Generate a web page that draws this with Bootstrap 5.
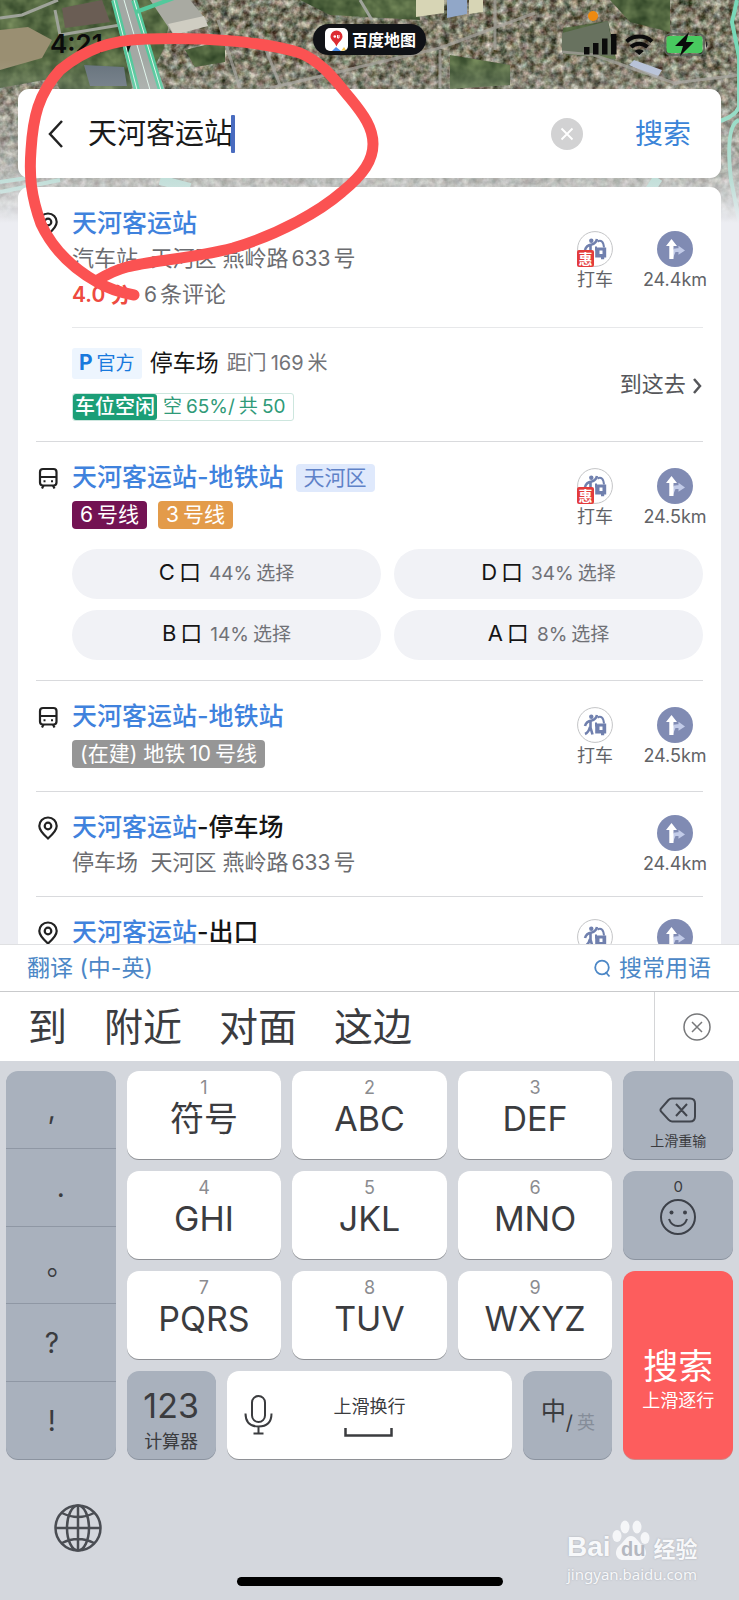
<!DOCTYPE html>
<html lang="zh-CN">
<head>
<meta charset="utf-8">
<meta name="viewport" content="width=device-width, initial-scale=1">
<title>百度地图 - 天河客运站</title>
<link href="https://cdn.jsdelivr.net/npm/bootstrap@5.3.0/dist/css/bootstrap.min.css" rel="stylesheet">
<style>
  body { font-family: Inter, "Noto Sans CJK SC", sans-serif; background: #ecedf2; color: #151515; }
  button { font-family: inherit; color: inherit; border: 0; background: none; padding: 0; }
  a { text-decoration: none; color: inherit; }
  .app { height: 100vh; overflow: hidden; }
  .map-bg { position: absolute; top: 0; left: 0; width: 100%; height: 240px; }
  .ink { position: absolute; top: 0; left: 0; width: 400px; height: 320px; pointer-events: none; z-index: 5; }

  .status { height: 89px; padding: 0 28px; }
  .clock { font-size: 26px; font-weight: 600; line-height: 40px; color: #0b0b0b; }
  .clock span { margin-left: 22px; }
  .island { background: #101216; color: #fff; border-radius: 16px; height: 31px; padding: 0 10px 0 12px; font: 700 16px/31px "Noto Sans CJK SC", sans-serif; }
  .side { flex: 1 1 0; }

  .sheet { background: #fff; border-radius: 11px; margin: 0 18px; }
  .searchbar { height: 89px; padding: 0 30px; }
  .searchbar input { border: 0; outline: 0; width: 100%; font-size: 29px; line-height: 42px; padding: 0; color: #1a1a1a; background: none; }
  .caret { position: absolute; left: 143px; top: 2px; width: 4px; height: 38px; background: #4a6cc0; border-radius: 1px; }
  .go { font-size: 28px; line-height: 42px; color: #3a84d8; }

  .results { border-radius: 11px 11px 0 0; margin-top: 9px; min-height: 0; padding: 1px 18px 0; overflow: hidden; }
  .place { border-bottom: 1px solid #d9dadd; padding: 18px 0 14px; display: grid; grid-template-columns: 36px minmax(0, 1fr); }
  .place > .marker { width: 24px; height: 36px; display: flex; align-items: center; }
  .transit { min-height: 78px; }
  .name { font-size: 25px; font-weight: 500; line-height: 24px; padding: 5px 0 7px; color: #151515; margin: 0; white-space: nowrap; }
  .name em { font-style: normal; color: #3f82dd; }
  .meta { font-size: 22px; line-height: 32px; padding-bottom: 3px; color: #6b6c70; white-space: nowrap; }
  .meta .num { margin: 0 3px; font-size: 21px; }
  .score { color: #ee4a40; font-weight: 600; font-size: 21px; }
  .num { margin: 0 4px; }
  .tag { display: inline-block; border-radius: 4px; font-size: 21px; line-height: 28px; color: #fff; padding: 0 8px; white-space: nowrap; }
  .name-row { gap: 12px; }
  .district { background: #dfe9fc; color: #5f82c8; }
  .tags { margin-top: 5px; display: flex; gap: 11px; }
  .acts { display: flex; gap: 34px; }
  .taxi, .route { display: flex; flex-direction: column; align-items: center; font-size: 18px; line-height: 26px; color: #626367; white-space: nowrap; }
  .taxi { width: 36px; }
  .route { width: 56px; }
  .disc { position: relative; width: 36px; height: 36px; }
  .disc svg { display: block; }
  .deal { position: absolute; left: 0; bottom: 0; width: 17px; height: 17px; border-radius: 2px; background: #e33b3b; color: #fff; font: 700 14px/16px "Noto Sans CJK SC", sans-serif; text-align: center; }
  .parking { border-top: 1px solid #e7e8ea; margin-top: 13px; padding: 20px 0 6px; }
  .official { background: #edf5fe; color: #1879dd; font-size: 19px; line-height: 30px; padding: 0 7px; border-radius: 3px; }
  .official b { font-size: 21px; margin-right: 4px; }
  .lot { font-size: 23px; line-height: 30px; }
  .dist { font-size: 20px; line-height: 30px; color: #737478; }
  .vacancy { border: 1px solid #cde6de; border-radius: 3px; display: flex; width: fit-content; height: 28px; font-size: 19px; line-height: 26px; color: #2f9a78; padding-right: 8px; margin-top: 14px; }
  .vacancy strong { background: #1b9e77; color: #fff; font-size: 20px; font-weight: 500; padding: 0 2px; margin-right: 6px; border-radius: 3px; }
  .togo { font-size: 22px; color: #55565a; }
  .exits { grid-column: 2; display: grid; grid-template-columns: 1fr 1fr; gap: 11px 13px; margin: 11px 0 6px; }
  .exits button { height: 50px; border-radius: 25px; background: #f1f2f6; font-size: 22px; line-height: 46px; padding-bottom: 4px; }
  .exits i { font-style: normal; margin-right: 4px; }
  .exits span { font-size: 19px; color: #707176; margin-left: 8px; }

  .keyboard { background: #d4d7dd; color: #3b3c3f; }
  .phrases { background: #fff; height: 47px; border-top: 1px solid #dfe0e2; padding: 0 28px 0 27px; font-size: 23px; color: #4c87c6; }
  .candidates { background: #fff; height: 70px; border-top: 1px solid #c9cacc; padding-left: 28px; font-size: 39px; line-height: 70px; }
  .candidates .words { gap: 37px; }
  .dismiss { width: 85px; border-left: 1px solid #d4d5d7; }
  .keys { display: grid; grid-template-columns: 110fr 155fr 155fr 155fr 110fr; grid-auto-rows: 88px; gap: 12px 11px; padding: 10px 6px 0; }
  .key { background: #fff; border-radius: 12px; box-shadow: 0 1px 0 #8e9095; display: flex; flex-direction: column; align-items: center; font-size: 34px; line-height: 38px; min-width: 0; }
  .key small { font-size: 18px; line-height: 24px; color: #8b8c90; padding-top: 5px; }
  .dim { background: #a9b1bd; box-shadow: 0 1px 0 #8b939f; }
  .puncts { grid-row: span 4; border-radius: 12px; overflow: hidden; background: #a9b1bd; box-shadow: 0 1px 0 #8b939f; }
  .puncts button { flex: 1; border-bottom: 1px solid #8f97a4; padding-right: 18px; font-size: 28px; }
  .puncts button:last-child { border: 0; }
  .bottom-keys { grid-column: span 3; display: grid; grid-template-columns: 89fr 286fr 89fr; gap: 11px; }
  .enter { grid-row: span 2; background: #fd5d5d; color: #fff; box-shadow: 0 1px 0 #c88; justify-content: center; font-size: 35px; line-height: 44px; padding-top: 28px; }
  .hint { font-size: 18px; line-height: 26px; }
  .footer-bar { height: 141px; padding: 45px 0 0 54px; position: relative; }
  .home { position: absolute; bottom: 14px; left: 50%; width: 36%; height: 9px; border-radius: 5px; background: #000; transform: translateX(-50%); }
  .watermark { position: absolute; right: 40px; bottom: 14px; width: 132px; color: #f7f8fa; text-shadow: 0 0 2px #a4a8b0; }
  .wm-logo { font: 700 28px/30px "Liberation Sans", sans-serif; }
  .wm-logo .cn { font: 700 22px/30px "Noto Sans CJK SC", sans-serif; margin-left: 4px; }
  .wm-url { font: 15px/24px "Noto Sans", sans-serif; }
</style>
<script src="https://cdn.jsdelivr.net/npm/bootstrap@5.3.0/dist/js/bootstrap.bundle.min.js"></script>
</head>
<body>
<svg width="0" height="0" class="position-absolute" aria-hidden="true">
  <symbol id="pin" viewBox="0 0 24 26"><path d="M12 2.500c-5 0-8.700 3.800-8.700 8.600C3.300 16 8.500 20.500 12 23.500c3.500-3 8.700-7.500 8.700-12.400C20.700 6.300 17 2.500 12 2.500z" fill="none" stroke="#222" stroke-width="2.200"/><circle cx="12" cy="11" r="3.300" fill="none" stroke="#222" stroke-width="2.200"/></symbol>
  <symbol id="bus" viewBox="0 0 24 26"><rect x="4" y="4" width="16.500" height="16.500" rx="3" fill="none" stroke="#222" stroke-width="2.200"/><path d="M4 12h16.500M7.500 20.500l-1.500 3M17 20.500l1.500 3" stroke="#222" stroke-width="2.200"/><path d="M7.500 15.200h2v2h-2zM15 15.200h2v2h-2z" fill="#222"/></symbol>
  <symbol id="cab" viewBox="0 0 36 36"><circle cx="18" cy="18" r="17.400" fill="#fff" stroke="#c3c4c6" stroke-width="1"/><circle cx="14.300" cy="9.800" r="2.200" fill="#7080ae"/><path d="M20 8c-1 4-3 5-5.500 5.500-3 .5-5.500 2-6.500 5.500M13.500 13.500v7l2 7M13 20c-1 4-2.500 6-5 7" fill="none" stroke="#7080ae" stroke-width="2.600"/><path d="M20.500 10.500c3.500-1.800 6 0 6.500 6M19 15.500v4" fill="none" stroke="#7080ae" stroke-width="2"/><path fill-rule="evenodd" d="M18.200 16.500h11v10h-2v1.800h-3.200v-1.800h-5.800zM22.500 19.500v3.500h3v-3.500z" fill="#7080ae"/></symbol>
  <symbol id="turn" viewBox="0 0 36 36"><circle cx="18" cy="18" r="18" fill="#808bb3"/><path d="M16 27v-7c0-2 1-2.700 5.500-2.700v-2.500l6.500 4.700-6.500 4.200v-2.700h-3" fill="#c2cbe8"/><path d="M12.300 28V15H9l5.500-7 5.500 7h-3.500v13z" fill="#fff"/></symbol>
</svg>

<div class="app d-flex flex-column position-relative">
  <svg class="map-bg" viewBox="0 0 739 240" preserveAspectRatio="xMidYMin slice" aria-hidden="true">
    <defs>
      <filter id="roofs" x="0" y="0" width="100%" height="100%" color-interpolation-filters="sRGB"><feTurbulence type="fractalNoise" baseFrequency=".14" numOctaves="3" seed="8"/><feColorMatrix values=".95 .2 0 0 -.09  .95 0 .1 0 -.05  .95 0 0 .1 -.12  0 0 0 0 1"/></filter>
      <filter id="grass" x="0" y="0" width="100%" height="100%" color-interpolation-filters="sRGB"><feTurbulence type="fractalNoise" baseFrequency=".06" numOctaves="3" seed="3"/><feColorMatrix values=".4 0 0 0 .12  .4 0 0 0 .2  .3 0 0 0 .1  0 0 0 0 1"/><feComposite in2="SourceGraphic" operator="in"/></filter>
      <linearGradient id="fade" x2="0" y2="1"><stop offset=".25" stop-color="#ecedf2" stop-opacity="0"/><stop offset=".72" stop-color="#dcdfe3" stop-opacity=".6"/><stop offset=".93" stop-color="#ecedf2"/></linearGradient>
    </defs>
    <rect width="739" height="240" filter="url(#roofs)"/>
    <g filter="url(#grass)">
      <path d="M0 0h175l-12 50-15 30-20 10H60l-5-12-55 10z"/><path d="M300 0h118l2 20-90-5z"/><path d="M610 0h60v32l-40-10zM563 28l45-7 8 38-53-5zM185 50l40-10v22l-30 5zM450 55l60 10v20l-60 4z"/>
    </g>
    <path d="M0 30l28-3 24 13-10 18-42 12z" fill="#9a8f72"/>
    <path d="M0 18l22-3L58 0M55 10l5 25 60-10M360 0l12 20" fill="none" stroke="#9fa39a" stroke-width="3"/>
    <path d="M62 8l40-8 8 22-45 6z" fill="#6a5d54"/>
    <path d="M150 0h40l18 22-35 12z" fill="#a9aaa2"/><path d="M168 24l36-8 4 10-34 9z" fill="#cfcdc2"/>
    <path d="M416 0h28v13l-28 4z" fill="#d7d5b5"/><path d="M447 0h20v14l-20 4z" fill="#91a7c8"/><path d="M469 0h14v12l-14 2z" fill="#d7d5b5"/>
    <path d="M562 33l46-12 6 35-52-3z" fill="#68725f"/><path d="M634 60l28 10-5 8-28-13z" fill="#b7c2d8"/>
    <path d="M84 65l40 2 3 19H90z" fill="#66727c"/>
    <path d="M270 88l170-40 95-35M440 50v38M218 20l22 68M260 35l20 50M495 0v50M739 75l-65 8-80-28-32-3" fill="none" stroke="#a4a19b" stroke-width="3" opacity=".75"/>
    <path d="M112 0h20l33 90h-32z" fill="#a3a8a4"/>
    <path d="M114 0l23 90M134 0l27 90" stroke="#53c99c" stroke-width="6"/>
    <path d="M114 0l23 90M134 0l27 90M124 0l26 90" stroke="#e0f6ec" stroke-width="1"/>
    <path d="M136 12l38-14" stroke="#53c99c" stroke-width="4"/>
    <path d="M737 0l-5 22 7 35v50q-4 10-22 15M739 120q-14 5-8 60l10 50" fill="none" stroke="#79d8b8" stroke-width="4"/>
    <path d="M0 182l40-6M0 192l60-12" stroke="#8cdcc2" stroke-width="4"/>
    <path d="M160 180l30 8M650 190l8-12" stroke="#8fdcc4" stroke-width="10"/>
    <circle cx="593" cy="16" r="5" fill="#ee8a10"/>
    <rect width="739" height="240" fill="url(#fade)"/>
  </svg>

  <header class="status d-flex position-relative flex-shrink-0">
    <div class="side clock d-flex align-items-start"><span class="mt-4">4:21</span>
      <svg class="ms-3 mt-4" width="16" height="40" viewBox="0 0 16 40" aria-hidden="true"><path d="M1 21L15 13 9 29 7.500 22z" fill="#111"/></svg></div>
    <div class="island d-flex align-items-center gap-1 mt-4 align-self-start">
      <svg width="23" height="23" viewBox="0 0 23 23" aria-hidden="true"><rect width="23" height="23" rx="5" fill="#fff"/><path d="M7 23l4-4 5 4z" fill="#4b8eea"/><path d="M16 23l3-4 2 3z" fill="#f5c64b"/><path d="M11.500 2.500a6 6 0 0 0-6 6c0 3.500 4 5 6 10 2-5 6-6.500 6-10a6 6 0 0 0-6-6z" fill="#dd2c32"/><circle cx="9.800" cy="8.500" r="1.300" fill="#fff"/><path d="M12.500 7v3h1.500V7" fill="none" stroke="#fff"/></svg>
      百度地图</div>
    <div class="side d-flex justify-content-end">
      <svg class="mt-4" width="128" height="40" viewBox="0 0 128 40" aria-hidden="true">
        <path d="M1 23h5.500v7.500H1zM10 19h5.500v11.500H10zM19 14.500h5.500v16H19zM28 10h5.500v20.500H28z" fill="#0b0b0b"/>
        <g fill="none" stroke="#0b0b0b" stroke-width="4"><path d="M43.500 17.500a19 19 0 0 1 25.500 0M48 23a12 12 0 0 1 16.500 0"/></g><path d="M51.500 27a7 7 0 0 1 9.500 0l-4.700 4z" fill="#0b0b0b"/>
        <rect x="82" y="10" width="39" height="21" rx="5" fill="none" stroke="#5b625b" stroke-width="1.500"/><rect x="83.500" y="12" width="36" height="17" rx="3" fill="#48c95f"/><path d="M123 17q3 3 0 7z" fill="#222"/>
        <path d="M106 8L92 22h8l-3 10 14-14h-8z" fill="#0b0b0b"/>
      </svg>
    </div>
  </header>

  <form class="sheet searchbar d-flex align-items-center position-relative flex-shrink-0" role="search" onsubmit="return false">
    <button type="button" aria-label="返回"><svg class="d-block" width="16" height="30" viewBox="0 0 16 30"><path d="M14 2L2 15l12 13" fill="none" stroke="#222" stroke-width="2.500"/></svg></button>
    <div class="position-relative flex-grow-1 ms-4"><input type="text" value="天河客运站" aria-label="搜索地点"><span class="caret"></span></div>
    <button type="button" class="me-5" aria-label="清除"><svg class="d-block" width="32" height="32" viewBox="0 0 32 32"><circle cx="16" cy="16" r="16" fill="#d2d2d3"/><path d="M10.500 10.500l11 11m0-11l-11 11" stroke="#fff" stroke-width="1.800"/></svg></button>
    <button type="submit" class="go ms-1">搜索</button>
  </form>

  <main class="sheet results flex-grow-1 position-relative">
    <article class="place">
      <span class="marker"><svg width="24" height="26"><use href="#pin"/></svg></span>
      <div>
        <div class="d-flex align-items-center">
          <div class="flex-grow-1"><h2 class="name"><a href="#"><em>天河客运站</em></a></h2>
            <div class="meta">汽车站 &nbsp;天河区 燕岭路<span class="num">633</span>号</div>
            <div class="meta"><span class="score">4.0 分</span>&nbsp; <span class="num ms-0">6</span>条评论</div></div>
          <div class="acts mt-1"><button type="button" class="taxi"><span class="disc"><svg width="36" height="36"><use href="#cab"/></svg><span class="deal">惠</span></span>打车</button>
          <button type="button" class="route"><span class="disc"><svg width="36" height="36"><use href="#turn"/></svg></span>24.4km</button></div>
        </div>
        <div class="parking d-flex align-items-center">
          <div class="flex-grow-1">
            <div class="d-flex"><span class="official"><b>P</b>官方</span><span class="lot ms-2">停车场</span><span class="dist ms-2">距门<span class="num">169</span>米</span></div>
            <div class="vacancy"><strong>车位空闲</strong>空<span class="num">65%/</span>共<span class="num me-0">50</span></div>
          </div>
          <a href="#" class="togo">到这去 <svg width="11" height="18" viewBox="0 0 11 18" aria-hidden="true"><path d="M2 2l6 7-6 7" fill="none" stroke="#55565a" stroke-width="2.500"/></svg></a>
        </div>
      </div>
    </article>

    <article class="place">
      <span class="marker"><svg width="24" height="26"><use href="#bus"/></svg></span>
      <div class="transit d-flex align-items-center">
        <div class="flex-grow-1 align-self-start"><div class="name-row d-flex align-items-center"><h2 class="name"><a href="#"><em>天河客运站-地铁站</em></a></h2><span class="tag district">天河区</span></div>
          <div class="tags"><span class="tag" style="background:#731353"><span class="num ms-0">6</span>号线</span><span class="tag" style="background:#e39b4a"><span class="num ms-0">3</span>号线</span></div></div>
        <div class="acts"><button type="button" class="taxi"><span class="disc"><svg width="36" height="36"><use href="#cab"/></svg><span class="deal">惠</span></span>打车</button>
        <button type="button" class="route"><span class="disc"><svg width="36" height="36"><use href="#turn"/></svg></span>24.5km</button></div>
      </div>
      <div class="exits">
        <button type="button"><i>C</i>口<span><i>44%</i>选择</span></button><button type="button"><i>D</i>口<span><i>34%</i>选择</span></button>
        <button type="button"><i>B</i>口<span><i>14%</i>选择</span></button><button type="button"><i>A</i>口<span><i>8%</i>选择</span></button>
      </div>
    </article>

    <article class="place">
      <span class="marker"><svg width="24" height="26"><use href="#bus"/></svg></span>
      <div class="transit d-flex align-items-center">
        <div class="flex-grow-1 align-self-start"><h2 class="name"><a href="#"><em>天河客运站-地铁站</em></a></h2>
          <div class="tags"><span class="tag" style="background:#969696">(在建) 地铁<span class="num">10</span>号线</span></div></div>
        <div class="acts"><button type="button" class="taxi"><span class="disc"><svg width="36" height="36"><use href="#cab"/></svg></span>打车</button>
        <button type="button" class="route"><span class="disc"><svg width="36" height="36"><use href="#turn"/></svg></span>24.5km</button></div>
      </div>
    </article>

    <article class="place">
      <span class="marker"><svg width="24" height="26"><use href="#pin"/></svg></span>
      <div class="d-flex align-items-center">
        <div class="flex-grow-1"><h2 class="name"><a href="#"><em>天河客运站</em>-停车场</a></h2>
          <div class="meta">停车场 &nbsp;天河区 燕岭路<span class="num">633</span>号</div></div>
        <div class="acts"><button type="button" class="route"><span class="disc"><svg width="36" height="36"><use href="#turn"/></svg></span>24.4km</button></div>
      </div>
    </article>

    <article class="place">
      <span class="marker"><svg width="24" height="26"><use href="#pin"/></svg></span>
      <div class="d-flex align-items-start">
        <h2 class="name flex-grow-1"><a href="#"><em>天河客运站</em>-出口</a></h2>
        <div class="acts mt-1"><button type="button" class="taxi" aria-label="打车"><span class="disc"><svg width="36" height="36"><use href="#cab"/></svg></span></button>
        <button type="button" class="route" aria-label="路线"><span class="disc"><svg width="36" height="36"><use href="#turn"/></svg></span></button></div>
      </div>
    </article>
  </main>

  <section class="keyboard flex-shrink-0 position-relative" aria-label="键盘">
    <div class="phrases d-flex justify-content-between align-items-center">
      <a href="#">翻译 (中-英)</a>
      <a href="#" class="d-flex align-items-center gap-2"><svg width="17" height="19" viewBox="0 0 17 19" aria-hidden="true"><circle cx="8" cy="8.500" r="6.800" fill="none" stroke="#4c87c6" stroke-width="1.800"/><path d="M11.500 13l4 4.500" stroke="#4c87c6" stroke-width="1.800"/></svg>搜常用语</a>
    </div>
    <div class="candidates d-flex justify-content-between">
      <div class="words d-flex"><button type="button">到</button><button type="button">附近</button><button type="button">对面</button><button type="button">这边</button></div>
      <button type="button" class="dismiss d-flex align-items-center justify-content-center" aria-label="关闭"><svg width="28" height="28" viewBox="0 0 28 28"><circle cx="14" cy="14" r="13" fill="none" stroke="#77787a" stroke-width="1.500"/><path d="M9 9l10 10m0-10L9 19" stroke="#77787a" stroke-width="1.500"/></svg></button>
    </div>
    <div class="keys">
      <div class="puncts d-flex flex-column"><button type="button">,</button><button type="button" class="pe-0">.</button><button type="button" class="pe-0">。</button><button type="button">?</button><button type="button">!</button></div>
      <button type="button" class="key"><small>1</small>符号</button>
      <button type="button" class="key"><small>2</small>ABC</button>
      <button type="button" class="key"><small>3</small>DEF</button>
      <button type="button" class="key dim justify-content-end pb-2"><svg class="mb-2" width="38" height="26" viewBox="0 0 38 26" aria-hidden="true"><path d="M13 1.500h18q5 0 5 5v13q0 5-5 5H13q-2 0-3.500-1.800L2 14.500q-1-1.500 0-3L9.500 3Q11 1.500 13 1.500zM17 7l11 12m0-12L17 19" fill="none" stroke="#41454d" stroke-width="2"/></svg><span style="font-size:14px;line-height:20px">上滑重输</span></button>

      <button type="button" class="key"><small>4</small>GHI</button>
      <button type="button" class="key"><small>5</small>JKL</button>
      <button type="button" class="key"><small>6</small>MNO</button>
      <button type="button" class="key dim"><small class="text-reset pt-1" style="font-size:15px">0</small><svg width="36" height="36" viewBox="0 0 36 36" aria-hidden="true"><circle cx="18" cy="18" r="17" fill="none" stroke="#3d4149" stroke-width="2"/><circle cx="11.500" cy="13.500" r="2" fill="#3d4149"/><circle cx="25" cy="13.500" r="2" fill="#3d4149"/><path d="M9 20q2.500 7 9 7t9-7" fill="none" stroke="#3d4149" stroke-width="2"/></svg></button>

      <button type="button" class="key"><small>7</small>PQRS</button>
      <button type="button" class="key"><small>8</small>TUV</button>
      <button type="button" class="key"><small>9</small>WXYZ</button>
      <button type="button" class="key enter">搜索<span class="hint">上滑逐行</span></button>

      <div class="bottom-keys">
        <button type="button" class="key dim justify-content-end pb-1"><span class="mb-1">123</span><span class="hint">计算器</span></button>
        <button type="button" class="key position-relative justify-content-center">
          <svg class="position-absolute start-0 ms-3" width="30" height="42" viewBox="0 0 30 42" aria-hidden="true"><rect x="9" y="2" width="13" height="26" rx="6.500" fill="none" stroke="#3b3c3f" stroke-width="2"/><path d="M2.500 19.500q0 13 13 13t13-13M15.500 32.500V39M10.500 39.500h10" fill="none" stroke="#3b3c3f" stroke-width="2"/></svg>
          <span class="hint">上滑换行</span>
          <svg class="mt-2" width="50" height="9" viewBox="0 0 50 9" aria-hidden="true"><path d="M1.500 0v7.500h46V0" fill="none" stroke="#3b3c3f" stroke-width="2.500"/></svg>
        </button>
        <button type="button" class="key dim flex-row justify-content-center"><span class="fs-3 pb-2">中</span><span class="fs-5 pt-3">/</span><span class="hint pt-3 ms-1" style="color:#858d99">英</span></button>
      </div>
    </div>
    <div class="footer-bar">
      <button type="button" aria-label="切换键盘"><svg class="d-block" width="48" height="48" viewBox="0 0 48 48"><g fill="none" stroke="#4a4d53" stroke-width="2.500"><circle cx="24" cy="24" r="22.500"/><ellipse cx="24" cy="24" rx="11" ry="22.500"/><path d="M24 1.500v45M1.500 24h45M8 9q16 8 32 0M8 39q16-8 32 0"/></g></svg></button>
      <div class="home"></div>
      <div class="watermark">
        <div class="wm-logo d-flex align-items-end"><span>Bai</span>
          <svg width="39" height="42" viewBox="0 2 39 42" aria-hidden="true"><g fill="#f5f6f8"><ellipse cx="6" cy="18" rx="4.500" ry="6"/><ellipse cx="14" cy="9" rx="4.500" ry="6.500"/><ellipse cx="26" cy="9" rx="4.500" ry="6.500"/><ellipse cx="34" cy="20" rx="4.500" ry="6"/><path d="M20 18c-5 0-7 6-11 9-7 6-4 15 3 15h16c7 0 10-9 3-15-4-3-6-9-11-9z"/></g><text x="10" y="38" font-size="20" fill="#b4b8c0" style="text-shadow:none">du</text></svg>
          <span class="cn">经验</span></div>
        <div class="wm-url">jingyan.baidu.com</div>
      </div>
    </div>
  </section>

  <svg class="ink" viewBox="0 0 400 320" aria-hidden="true"><path d="M134 295Q112 291 97 282Q58 260 41 224C31 196 29 176 31 150C33 118 38 94 60 70C84 50 110 40 147 39C200 37 262 41 300 53C322 62 335 80 350 98C364 115 373 128 373 144C373 160 364 174 342 192C320 211 280 234 233 248C195 258 150 261 127 267Q112 271 98 280" fill="none" stroke="#fb5252" stroke-width="11" stroke-linecap="round" stroke-linejoin="round"/></svg>
</div>
</body>
</html>
